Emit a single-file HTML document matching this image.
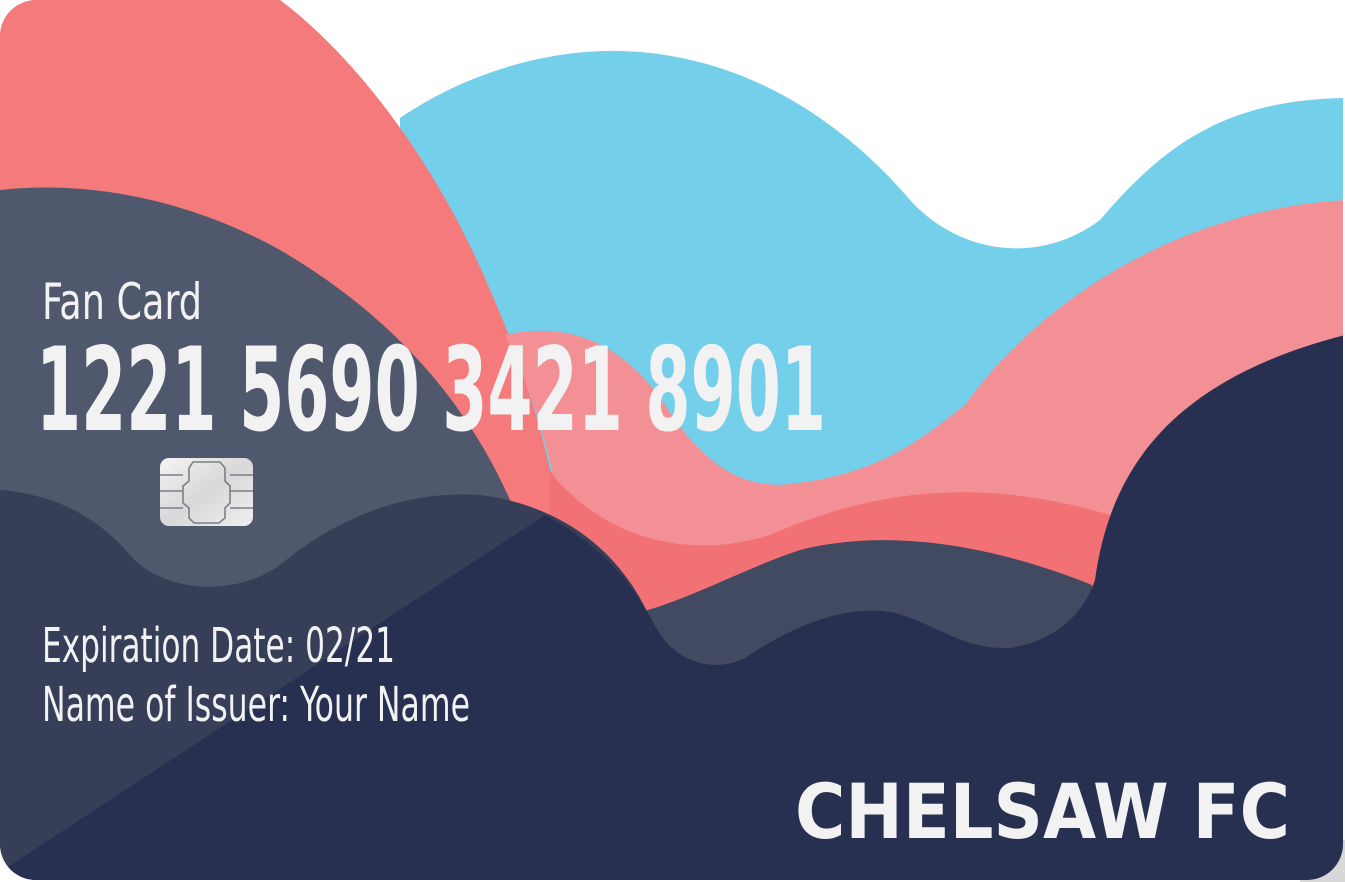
<!DOCTYPE html>
<html><head><meta charset="utf-8"><style>
html,body{margin:0;padding:0;background:#fff;}
svg{display:block}
</style></head><body>
<svg width="1345" height="882" viewBox="0 0 1345 882" xmlns="http://www.w3.org/2000/svg">
<defs>
<clipPath id="card"><rect x="0" y="0" width="1343" height="880" rx="36" ry="36"/></clipPath>
<linearGradient id="chip" x1="0" y1="0" x2="1" y2="1"><stop offset="0" stop-color="#f4f4f4"/><stop offset="0.5" stop-color="#d8d8d8"/><stop offset="1" stop-color="#f0f0f0"/></linearGradient>
</defs>
<rect x="1300" y="840" width="45" height="42" fill="#d8d8d8"/>
<g clip-path="url(#card)">
<rect width="1345" height="882" fill="#ffffff"/>
<path d="M400 118 C470 70 560 45 640 52 C760 62 850 130 910 200 C960 255 1040 265 1100 220 C1160 150 1220 100 1345 98 L1345 882 L400 882 Z" fill="#74cfeb"/>
<path d="M0 0 L280 0 C360 60 440 170 490 290 C530 380 550 460 560 520 L560 882 L0 882 Z" fill="#f47a7c"/>
<path d="M505 335 C570 320 625 345 665 405 C700 460 740 490 790 484 C880 474 920 440 965 405 C1040 300 1180 210 1345 200 L1345 882 L552 882 L552 470 C540 420 525 375 505 335 Z" fill="#f29096"/>
<path d="M550 470 L555 478 C610 540 690 560 770 535 C850 500 960 470 1110 515 L1110 882 L550 882 Z" fill="#f27174"/>
<path d="M0 190 C90 180 190 200 280 250 C400 320 470 410 510 500 L510 882 L0 882 Z" fill="#4f586c"/>
<path d="M630 615 C690 600 740 570 800 550 C880 530 980 540 1092 585 L1092 882 L630 882 Z" fill="#414a61"/>
<path d="M0 490 C60 495 100 520 130 555 C160 590 230 600 280 565 C340 515 410 490 480 495 C560 505 620 550 650 618 L650 882 L0 882 Z" fill="#373e58"/>
<path d="M0 872 L545 515 C600 545 630 580 652 620 C670 660 710 675 745 658 C790 628 840 605 890 612 C930 620 960 650 1010 648 C1060 640 1085 610 1095 580 C1110 470 1170 380 1345 335 L1345 882 L0 882 Z" fill="#273050"/>
</g>
<g>
<rect x="160" y="458" width="93" height="68" rx="9" fill="url(#chip)"/>
<path d="M160 475 H183 M160 491 H183 M160 508 H183 M230 475 H253 M230 491 H253 M230 508 H253 M193 462 H220 L225 468 V481 L230 486 V503 L225 508 V518 L219 523 H194 L189 518 V508 L183 503 V486 L189 481 V468 Z" fill="none" stroke="#7a7f8c" stroke-width="1.6"/>
</g>
<g fill="#f2f2f2" font-family="'Liberation Sans Narrow','DejaVu Sans Condensed','Liberation Sans',sans-serif">
<text x="42" y="319" font-size="50" textLength="160" lengthAdjust="spacingAndGlyphs">Fan Card</text>
<text x="36" y="430" font-size="116" font-weight="bold" textLength="790" lengthAdjust="spacingAndGlyphs">1221 5690 3421 8901</text>
<text x="42" y="662" font-size="48" textLength="353" lengthAdjust="spacingAndGlyphs">Expiration Date: 02/21</text>
<text x="42" y="721" font-size="48" textLength="428" lengthAdjust="spacingAndGlyphs">Name of Issuer: Your Name</text>
<text x="795" y="838" font-size="76" font-weight="bold" font-family="'DejaVu Sans','Liberation Sans',sans-serif" textLength="495" lengthAdjust="spacingAndGlyphs">CHELSAW FC</text>
</g>
</svg>
</body></html>
